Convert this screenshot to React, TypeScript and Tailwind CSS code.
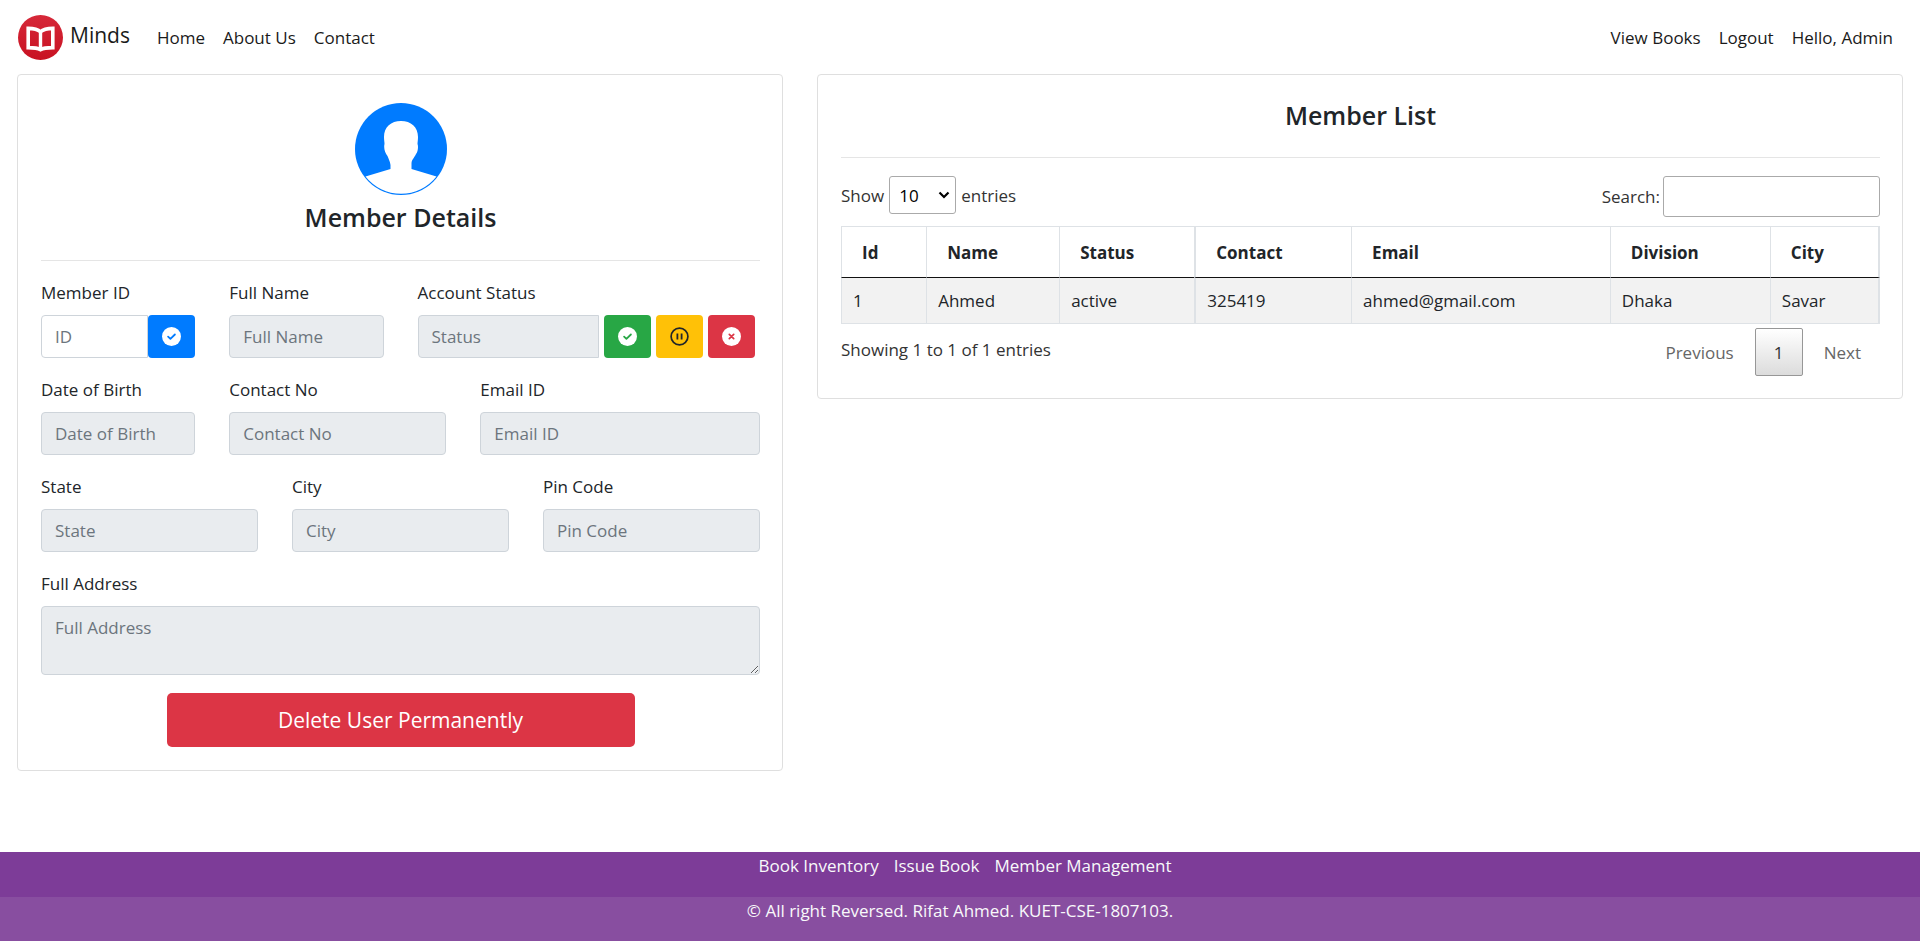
import React, { useState } from "react";

const control =
  "h-[43px] w-full min-w-0 rounded border border-[#ced4da] px-[13px] text-[#495057] placeholder:text-[#6c757d] focus:outline-none";
const readOnlyControl = control + " bg-[#e9ecef]";
const iconButton =
  "flex h-[43px] w-[47px] shrink-0 items-center justify-center rounded";

function Logo() {
  return (
    <svg viewBox="0 0 45 45" className="size-[45px]" aria-hidden="true">
      <defs>
        <linearGradient id="logo-red" x1="0" y1="0" x2="0" y2="1">
          <stop offset="0" stopColor="#d62839" />
          <stop offset="1" stopColor="#c81222" />
        </linearGradient>
      </defs>
      <circle cx="22.5" cy="22.5" r="22.5" fill="url(#logo-red)" />
      <path
        d="M10.2 13.4 C15.500 13.4 19.500 14 22.500 16.8 C25.500 14 29.500 13.4 34.800 13.4 V32.6 C29.500 32.6 25.500 32.8 22.500 34.600 C19.500 32.8 15.500 32.6 10.2 32.600 Z"
        fill="none"
        stroke="#fff"
        strokeWidth="3.6"
      />
      <path d="M22.5 16 V34" stroke="#fff" strokeWidth="3.4" />
    </svg>
  );
}

function Avatar() {
  return (
    <svg viewBox="0 0 92 92" className="size-[92px]" aria-hidden="true">
      <circle cx="46" cy="46" r="46" fill="#007bff" />
      <path
        d="M46 18 C56 18 63 24 63 34 C63 37 62.500 39 62.500 41 C63.500 43 63 49 61 51 C60 54 57 56 56.500 60 V66 L81.500 73.500 A45 45 0 0 1 10.500 73.500 L35.500 66 V62 C35 58 33.500 56 32.500 53 C30 50 28.500 45 29.500 41 C29.500 39 29 37 29 34 C29 24 36 18 46 18 Z"
        fill="#fff"
      />
    </svg>
  );
}

function CheckIcon(props: { className: string }) {
  return (
    <svg viewBox="0 0 19 19" className={"size-[19px] " + props.className} fill="none" aria-hidden="true">
      <circle cx="9.5" cy="9.5" r="9.5" fill="#fff" />
      <path
        d="M6.1 9.7 L8.400 11.9 L12.900 7.500"
        stroke="currentColor"
        strokeWidth="1.8"
        strokeLinecap="round"
        strokeLinejoin="round"
      />
    </svg>
  );
}

function PauseIcon() {
  return (
    <svg viewBox="0 0 19 19" className="size-[19px]" fill="none" stroke="currentColor" aria-hidden="true">
      <circle cx="9.5" cy="9.5" r="8.4" strokeWidth="1.7" />
      <path d="M7.400 6.400 V12.600 M11.600 6.400 V12.600" strokeWidth="1.8" />
    </svg>
  );
}

function CrossIcon() {
  return (
    <svg viewBox="0 0 19 19" className="size-[19px] text-[#dc3545]" fill="none" aria-hidden="true">
      <circle cx="9.5" cy="9.5" r="9.5" fill="#fff" />
      <path
        d="M7.300 7.300 L11.700 11.700 M11.700 7.300 L7.300 11.700"
        stroke="currentColor"
        strokeWidth="1.7"
        strokeLinecap="round"
      />
    </svg>
  );
}

function Field(props: { id: string; label: string; className: string }) {
  return (
    <div className={props.className}>
      <label htmlFor={props.id} className="mb-[9px] block">
        {props.label}
      </label>
      <input
        id={props.id}
        type="text"
        readOnly
        placeholder={props.label}
        className={readOnlyControl}
      />
    </div>
  );
}

function MemberDetails() {
  return (
    <section className="rounded border border-[#dfdfdf] pt-7 pr-[22px] pb-[23px] pl-[23px]">
      <div className="flex flex-col items-center gap-[6px]">
        <Avatar />
        <h4 className="text-[25px] leading-8 font-semibold">Member Details</h4>
      </div>
      <hr className="mt-[27px] mb-[18px] border-[#e5e5e5]" />
      <form
        className="grid grid-cols-12 gap-x-[34px] gap-y-[18px]"
        onSubmit={(e) => e.preventDefault()}
      >
        <div className="col-span-3">
          <label htmlFor="member-id" className="mb-[9px] block">
            Member ID
          </label>
          <div className="flex">
            <input
              id="member-id"
              type="text"
              placeholder="ID"
              className={control + " rounded-r-none bg-white"}
            />
            <button
              type="button"
              aria-label="Find member"
              className={iconButton + " bg-[#007bff]"}
            >
              <CheckIcon className="text-[#007bff]" />
            </button>
          </div>
        </div>
        <Field id="full-name" label="Full Name" className="col-span-3" />
        <div className="col-span-6">
          <label htmlFor="status" className="mb-[9px] block">
            Account Status
          </label>
          <div className="flex gap-[5px] pr-[5px]">
            <input
              id="status"
              type="text"
              readOnly
              placeholder="Status"
              className={readOnlyControl + " rounded-r-none"}
            />
            <button
              type="button"
              aria-label="Activate"
              className={iconButton + " bg-[#28a745]"}
            >
              <CheckIcon className="text-[#28a745]" />
            </button>
            <button
              type="button"
              aria-label="Pause"
              className={iconButton + " bg-[#ffc107] text-[#212529]"}
            >
              <PauseIcon />
            </button>
            <button
              type="button"
              aria-label="Deactivate"
              className={iconButton + " bg-[#dc3545]"}
            >
              <CrossIcon />
            </button>
          </div>
        </div>
        <Field id="dob" label="Date of Birth" className="col-span-3" />
        <Field id="contact" label="Contact No" className="col-span-4" />
        <Field id="email" label="Email ID" className="col-span-5" />
        <Field id="state" label="State" className="col-span-4" />
        <Field id="city" label="City" className="col-span-4" />
        <Field id="pin" label="Pin Code" className="col-span-4" />
        <div className="col-span-12">
          <label htmlFor="address" className="mb-[9px] block">
            Full Address
          </label>
          <textarea
            id="address"
            rows={2}
            readOnly
            placeholder="Full Address"
            className="block h-[69px] w-full resize rounded border border-[#ced4da] bg-[#e9ecef] px-[13px] py-[7px] placeholder:text-[#6c757d] focus:outline-none"
          />
        </div>
        <button
          type="button"
          className="col-span-8 col-start-3 h-[54px] rounded-[5px] bg-[#dc3545] text-[21px] text-white"
        >
          Delete User Permanently
        </button>
      </form>
    </section>
  );
}

const columns = [
  { name: "Id", style: "w-[8.2%] border-l" },
  { name: "Name", style: "w-[12.8%] border-l" },
  { name: "Status", style: "w-[13%] border-l" },
  { name: "Contact", style: "w-[15.1%] border-l-2" },
  { name: "Email", style: "w-[24.9%] border-l" },
  { name: "Division", style: "w-[15.4%] border-l" },
  { name: "City", style: "w-[10.6%] border-l border-r-2" },
];

const members = [
  ["1", "Ahmed", "active", "325419", "ahmed@gmail.com", "Dhaka", "Savar"],
];

function MemberList() {
  const [search, setSearch] = useState("");
  return (
    <section className="rounded border border-[#dfdfdf] pt-6 pr-[22px] pb-[22px] pl-[23px]">
      <h4 className="text-center text-[25px] leading-8 font-semibold">Member List</h4>
      <hr className="mt-[26px] mb-[18px] border-[#e5e5e5]" />
      <div className="flex items-start justify-between text-[#333]">
        <label className="flex items-center gap-[5px]">
          Show
          <span className="relative flex items-center">
            <select className="h-[38px] w-[67px] appearance-none rounded-[3px] border border-[#aaa] bg-white pl-[9px] text-black">
              <option>10</option>
              <option>25</option>
              <option>50</option>
              <option>100</option>
            </select>
            <svg
              viewBox="0 0 12 8"
              className="pointer-events-none absolute right-[6px] h-2 w-3"
              aria-hidden="true"
            >
              <path d="M1.500 1.500 L6 6 L10.500 1.500" fill="none" stroke="#000" strokeWidth="2.2" />
            </svg>
          </span>
          entries
        </label>
        <label className="flex items-center gap-[3px]">
          Search:
          <input
            type="search"
            value={search}
            onChange={(e) => setSearch(e.target.value)}
            className="h-[41px] w-[217px] rounded-[3px] border border-[#aaa] px-[6px] focus:outline-none"
          />
        </label>
      </div>
      <table className="mt-[9px] w-full table-fixed border-separate border-spacing-0 text-left">
        <thead>
          <tr>
            {columns.map((c) => (
              <th
                key={c.name}
                className={
                  c.style +
                  " h-[52px] border-t border-b border-[#dee2e6] border-b-[#111] pl-5 font-bold"
                }
              >
                {c.name}
              </th>
            ))}
          </tr>
        </thead>
        <tbody>
          {members.map((row) => (
            <tr key={row[0]} className="bg-[#f2f2f2]">
              {row.map((cell, i) => (
                <td
                  key={columns[i].name}
                  className={columns[i].style + " h-[46px] border-b border-[#dee2e6] pl-[11px]"}
                >
                  {cell}
                </td>
              ))}
            </tr>
          ))}
        </tbody>
      </table>
      <div className="mt-1 flex items-start justify-between text-[#333]">
        <p className="pt-2">Showing 1 to 1 of 1 entries</p>
        <nav className="flex items-center gap-[2px]" aria-label="Pages">
          <button type="button" className="px-[19px] text-[#666]">
            Previous
          </button>
          <button
            type="button"
            aria-current="page"
            className="h-12 w-12 rounded-[2px] border border-[#979797] bg-linear-to-b from-white to-[#dcdcdc]"
          >
            1
          </button>
          <button type="button" className="px-[19px] text-[#666]">
            Next
          </button>
        </nav>
      </div>
    </section>
  );
}

export default function App() {
  return (
    <div className="flex min-h-screen flex-col bg-white font-['Open_Sans','Noto_Sans',sans-serif] text-[17px] leading-[27px] text-[#212529]">
      <header className="flex h-[74px] items-center justify-between pr-[27px] pl-[18px] text-[#1a1a1a]">
        <div className="flex items-center">
          <a href="#" className="flex items-center gap-[7px] text-[21px]">
            <Logo />
            <span className="pb-1">Minds</span>
          </a>
          <nav className="ml-[27px] flex gap-[18px]">
            <a href="#">Home</a>
            <a href="#">About Us</a>
            <a href="#">Contact</a>
          </nav>
        </div>
        <nav className="flex gap-[18px]">
          <a href="#">View Books</a>
          <a href="#">Logout</a>
          <a href="#">Hello, Admin</a>
        </nav>
      </header>
      <main className="mb-10 grid grid-cols-12 items-start gap-x-[34px] px-[17px]">
        <div className="col-span-5">
          <MemberDetails />
        </div>
        <div className="col-span-7">
          <MemberList />
        </div>
      </main>
      <footer className="mt-auto text-center text-[#f8f9fa]">
        <nav className="flex h-[45px] items-start justify-center gap-[15px] bg-[#7d3c98] pl-[10px]">
          <a href="#">Book Inventory</a>
          <a href="#">Issue Book</a>
          <a href="#">Member Management</a>
        </nav>
        <p className="h-11 bg-[#884ea0]">
          © All right Reversed. Rifat Ahmed. KUET-CSE-1807103.
        </p>
      </footer>
    </div>
  );
}
